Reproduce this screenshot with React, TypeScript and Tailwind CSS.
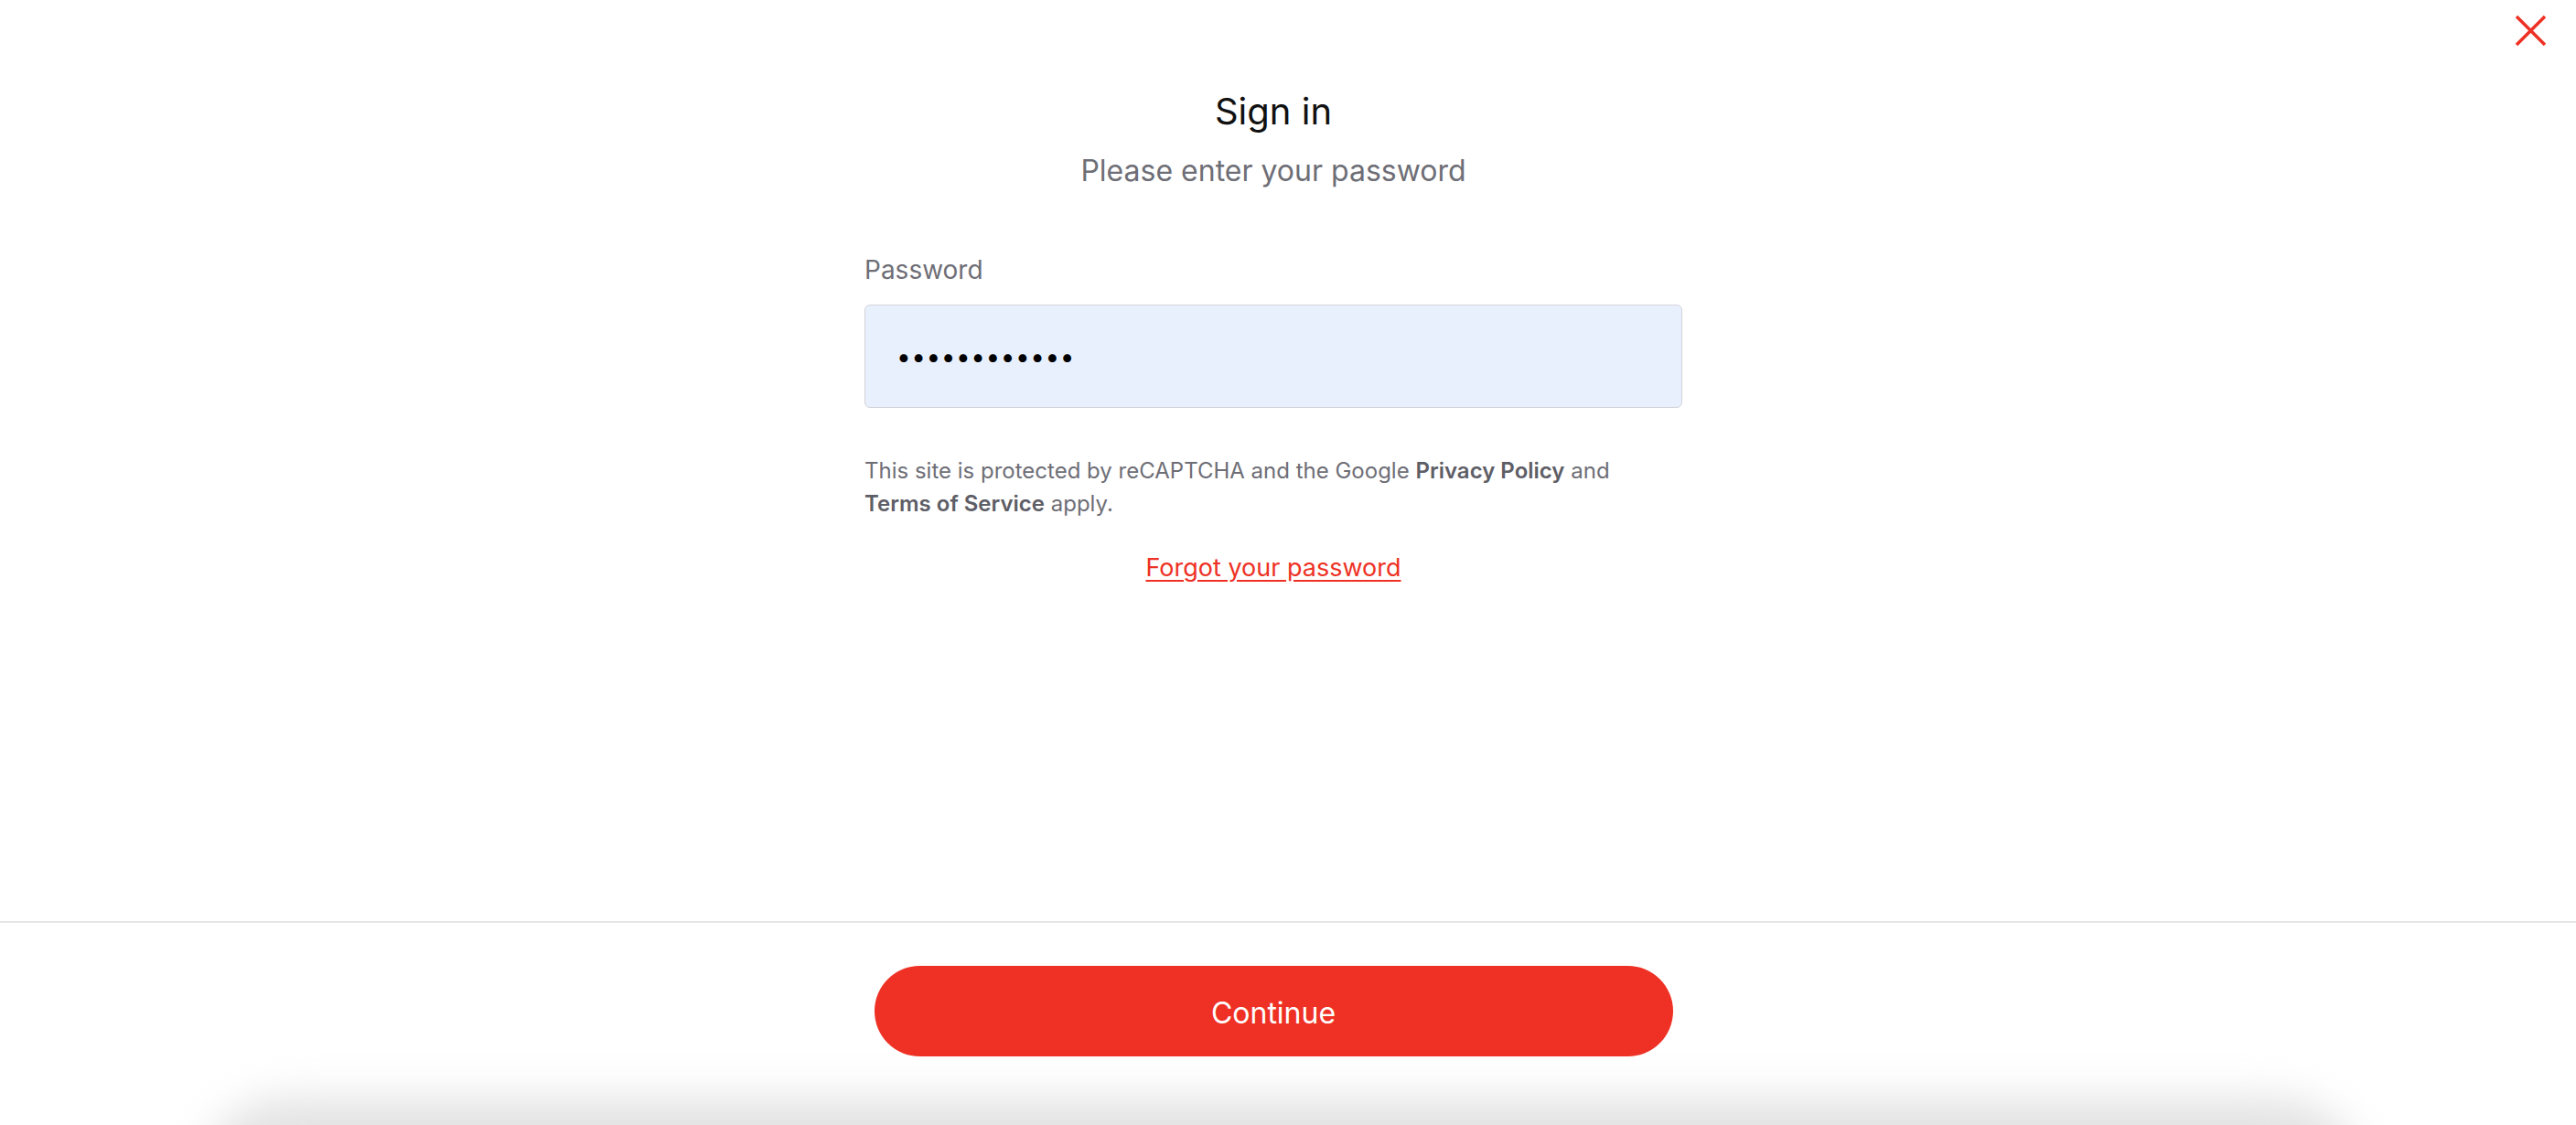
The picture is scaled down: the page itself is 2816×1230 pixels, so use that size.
import React from "react";

const CloseIcon = () => (
  <svg width="36" height="36" viewBox="0 0 36 36" fill="none">
    <path d="M2 2L33 33M33 2L2 33" stroke="#ee3124" strokeWidth="3.5" strokeLinecap="butt" />
  </svg>
);

export default function App() {
  return (
    <div className="relative h-[1230px] w-full overflow-hidden bg-white font-['Inter','Liberation_Sans',sans-serif]">
      <button className="absolute right-[31px] top-[16px]" aria-label="Close">
        <CloseIcon />
      </button>

      <div className="flex h-[1007px] flex-col items-center pr-[32px] pt-[98px]">
        <h1 className="text-[40px] leading-[48px] font-normal text-[#111111]">Sign in</h1>
        <p className="mt-[23px] text-[32px] leading-[36px] text-[#6e6e76]">Please enter your password</p>

        <div className="mt-[73px] flex w-[894px] flex-col">
          <label className="text-[28px] leading-[34px] text-[#6e6e76]">Password</label>
          <input
            type="password"
            readOnly
            defaultValue="passwordxxxx"
            className="mt-[21px] h-[113px] w-full rounded-[6px] border-[1.5px] border-[#d3d3d8] bg-[#e8f0fe] px-[34px] text-[28px] tracking-[0.5px] text-black outline-none"
          />
          <p className="mt-[51px] text-[24px] leading-[36px] text-[#6e6e76]">
            This site is protected by reCAPTCHA and the Google{" "}
            <span className="font-semibold text-[#5e5e66]">Privacy Policy</span> and
            <br />
            <span className="font-semibold text-[#5e5e66]">Terms of Service</span> apply.
          </p>
          <a href="#" className="mt-[36px] self-center text-[27px] leading-[32px] text-[#ee3124] underline underline-offset-[4px]">
            Forgot your password
          </a>
        </div>
      </div>

      <div className="h-[2px] w-full bg-[#e6e6e6]" />

      <div className="flex flex-col items-center pr-[32px] pt-[47px]">
        <button className="h-[99px] w-[873px] rounded-full bg-[#ee3124] pt-[5px] text-[32px] text-white">Continue</button>
      </div>

      <div className="ml-[215px] mt-[45px] h-[200px] w-[2371px] rounded-[110px] bg-[#e3e3e3] blur-[22px]" />
    </div>
  );
}
